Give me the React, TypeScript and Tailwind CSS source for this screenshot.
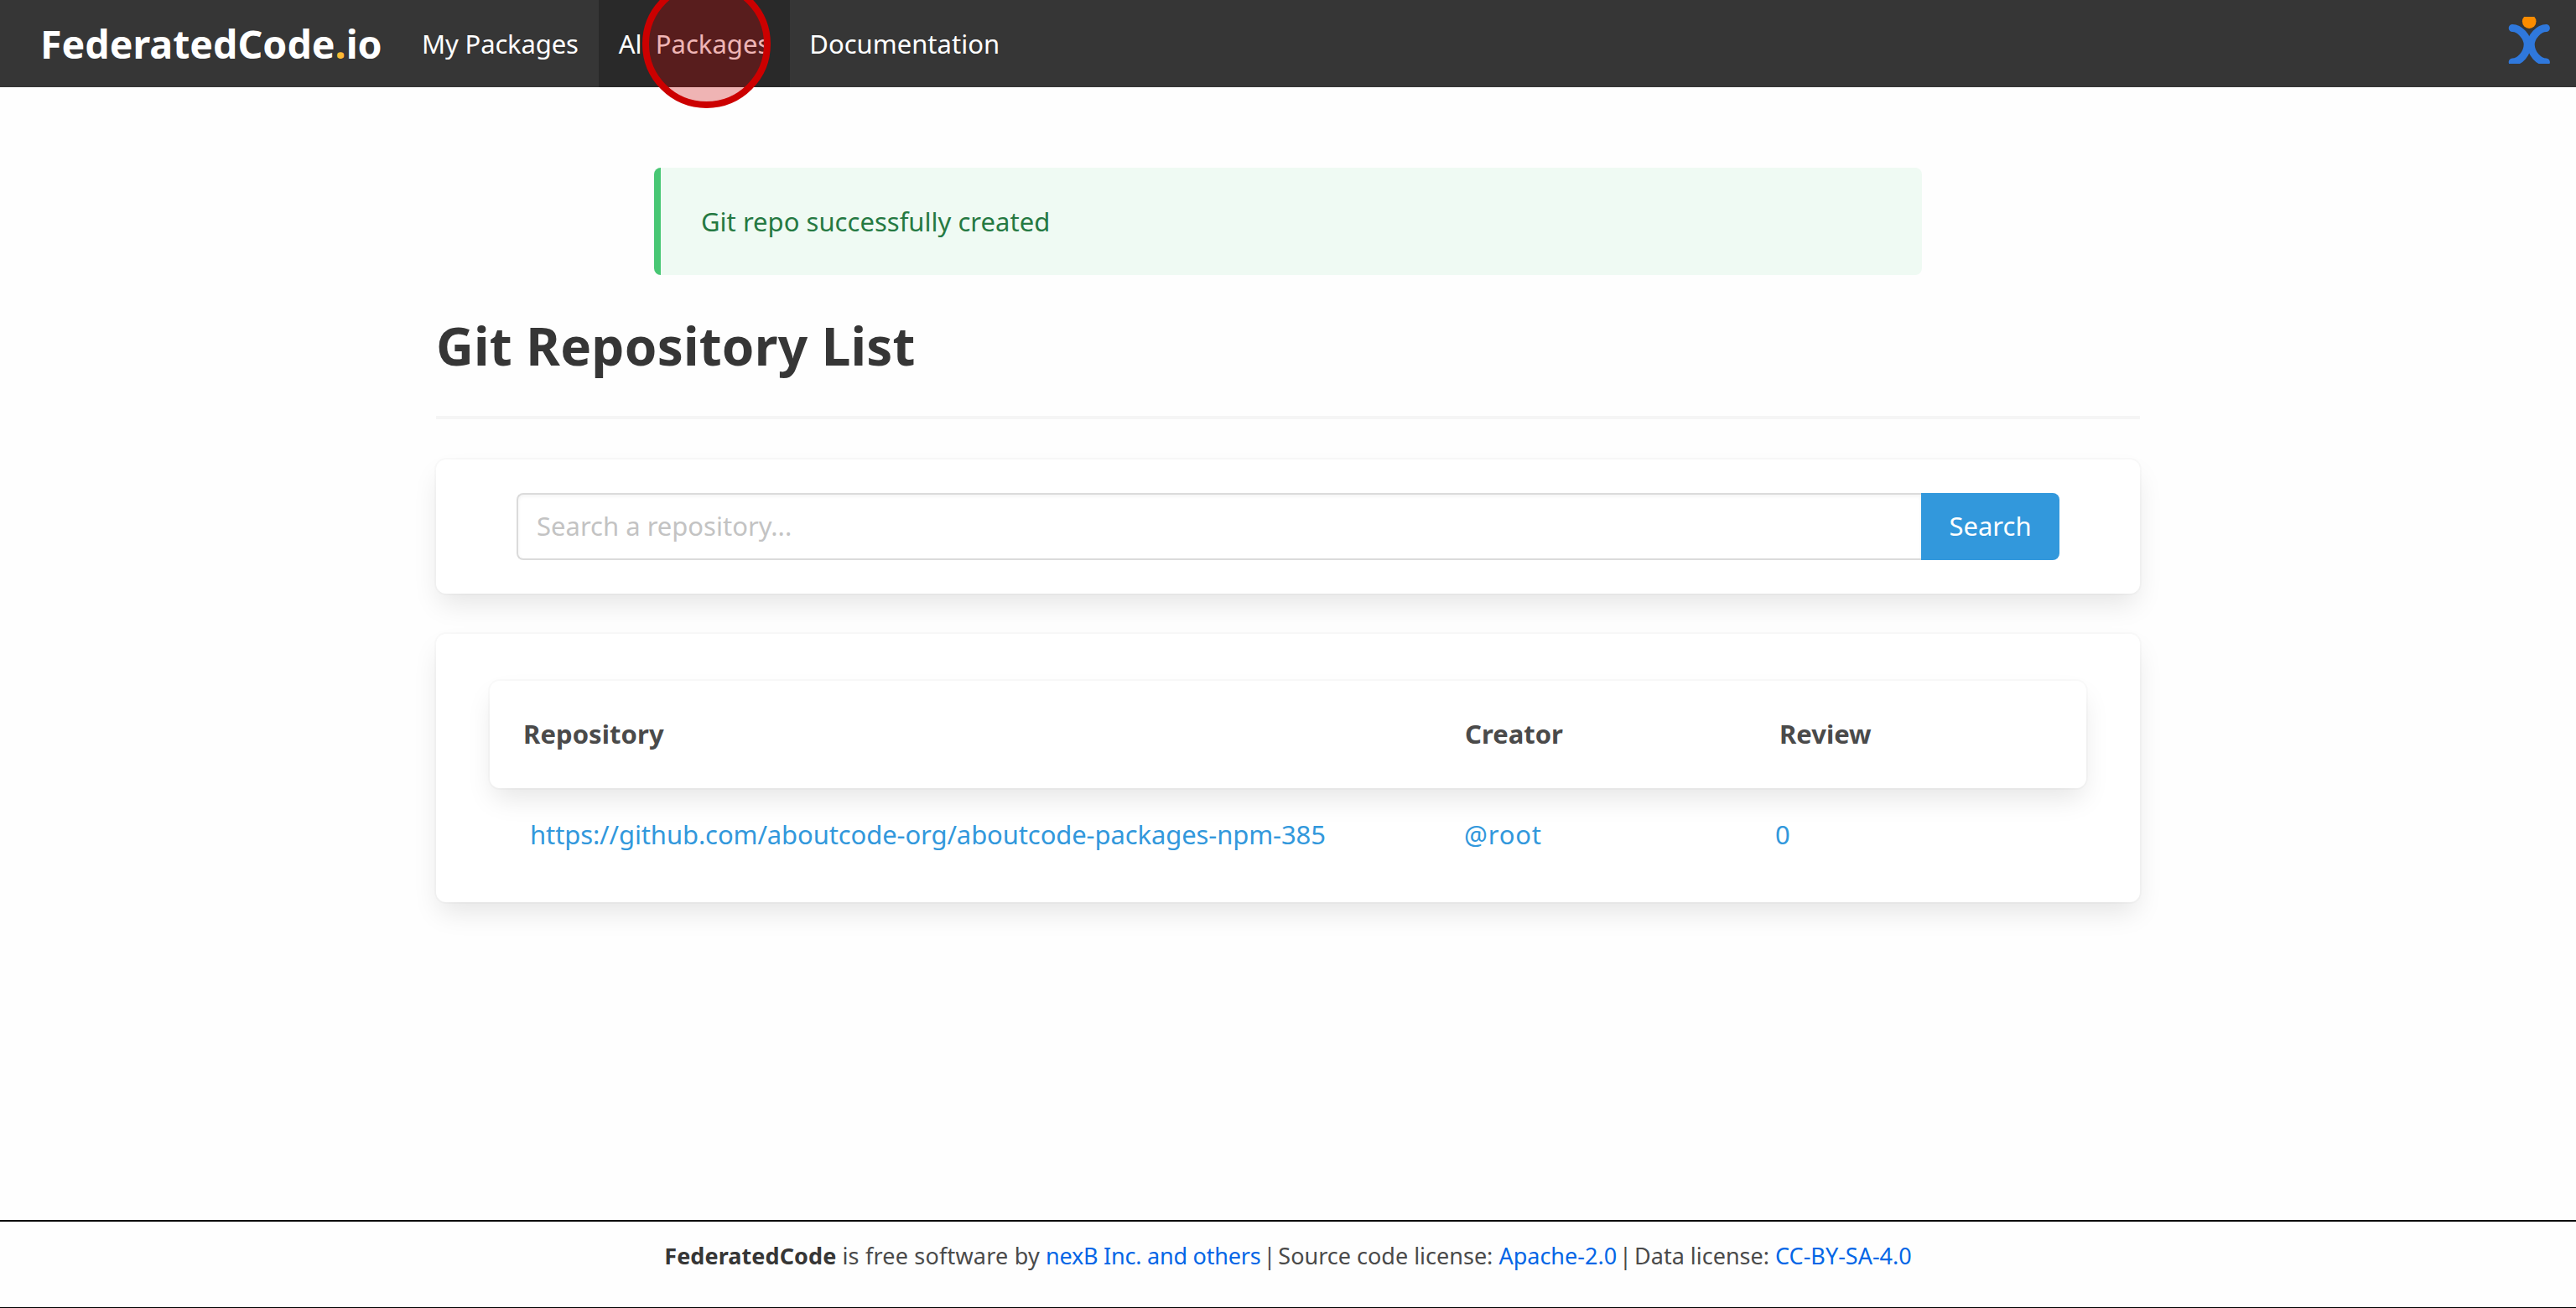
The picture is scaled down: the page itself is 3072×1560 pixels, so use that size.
import { clsx } from "clsx";
import type { ReactNode } from "react";

interface Repo {
  url: string;
  creator: string;
  reviews: number;
}

const navItems = [
  { label: "My Packages", active: false, className: "pl-[25px] tracking-[-0.15px]" },
  { label: "All Packages", active: true, className: "tracking-[0.03px]" },
  { label: "Documentation", active: false, className: "pl-[23px]" }
];

const repos: Repo[] = [{ url: "https://github.com/aboutcode-org/aboutcode-packages-npm-385", creator: "@root", reviews: 0 }];

export default function App() {
  return (
    <div className="flex h-[1560px] flex-col overflow-hidden border-b border-black bg-[#fefefe] font-['Noto_Sans','Open_Sans',sans-serif] text-[31px] leading-[48px] text-[#4a4a4a]">
      <Navbar />
      <main className="mx-auto w-[2032px] flex-1 pt-24">
        <div className="mx-auto w-[1512px] rounded-lg border-l-8 border-[#48c774] bg-[#effaf3] px-12 py-10 tracking-[0.02px] text-[#257942]">
          Git repo successfully created
        </div>
        <h1 className="mt-12 text-[62px] font-bold leading-[72px] tracking-[0.2px] text-[#363636]">Git Repository List</h1>
        <hr className="my-12 h-1 border-0 bg-[#f5f5f5]" />
        <Box className="px-24 py-10">
          <form className="flex h-20" onSubmit={(event) => event.preventDefault()}>
            <input
              type="text"
              placeholder="Search a repository..."
              className="min-w-0 flex-1 rounded-l-lg border-2 border-r-0 border-[#dbdbdb] bg-white px-[22px] pb-0.5 text-[#363636] shadow-[inset_0_2px_4px_rgba(10,10,10,0.05)] outline-none placeholder:text-[#c3c3c3]"
            />
            <button type="submit" className="w-[165px] rounded-r-lg bg-[#3298dc] pb-0.5 text-white">
              Search
            </button>
          </form>
        </Box>
        <Box className="mt-12 h-80 px-16 pt-14">
          <Box className="flex h-32 items-center pl-10 font-bold">
            <div className="w-[1123px] pb-0.5 tracking-[0.07px]">Repository</div>
            <div className="w-[375px] pb-0.5">Creator</div>
            <div className="pb-0.5">Review</div>
          </Box>
          {repos.map((repo) => (
            <div key={repo.url} className="flex pl-12 pt-[31px] text-[#3298dc]">
              <a href="#repo" className="w-[1114px] tracking-[-0.11px]">
                {repo.url}
              </a>
              <a href="#creator" className="w-[371px] tracking-[0.8px]">
                {repo.creator}
              </a>
              <a href="#reviews">{repo.reviews}</a>
            </div>
          ))}
        </Box>
      </main>
      <footer className="h-[104px] shrink-0 border-t-2 border-black pt-5 text-center text-[27px] leading-[42px]">
        <strong className="tracking-[0.08px] text-[#363636]">FederatedCode</strong> <span className="tracking-[0.2px]">is free software by</span>{" "}
        <FooterLink className="tracking-[-0.22px]">nexB Inc. and others</FooterLink> <span className="-mx-1">|</span> <span>Source code license:</span>{" "}
        <FooterLink>Apache-2.0</FooterLink> <span className="-mx-1">|</span> <span>Data license:</span> <FooterLink>CC-BY-SA-4.0</FooterLink>
      </footer>
    </div>
  );
}

function Navbar() {
  return (
    <nav className="flex h-[104px] shrink-0 items-stretch bg-[#363636] text-white">
      <a href="#home" className="flex w-[478px] items-center pl-12 text-[46.5px] font-bold">
        FederatedCode<span className="text-[#fdbb35]">.</span>io
      </a>
      {navItems.map((item) => (
        <a key={item.label} href="#nav" className={clsx("relative flex items-center px-6 pb-px", item.active && "bg-[#292929]", item.className)}>
          {item.label}
          {item.active ? <ClickMarker /> : null}
        </a>
      ))}
      <a href="#about" className="ml-auto flex items-start pr-7 pt-5">
        <AboutCodeLogo />
      </a>
    </nav>
  );
}

function ClickMarker() {
  return <span className="absolute left-[52px] top-[-24.5px] z-10 size-[153px] rounded-full border-8 border-[#cc0000] bg-[#cc0000]/29" />;
}

function AboutCodeLogo() {
  return (
    <svg width="56" height="56" viewBox="0 0 56 56" fill="none">
      <g stroke="#2f78dc" strokeWidth="9" strokeLinecap="round">
        <path d="M8.2 13.5C17 13.5 26 24 26.2 33C26 44 17 53.5 8.2 54" />
        <path d="M48.4 13.5C39.5 13.5 30.4 24 30.2 33C30.4 44 39.5 53.5 48.4 54" />
      </g>
      <path d="M23 25L28.3 28L33.6 25V43L28.3 39L23 43Z" fill="#2f78dc" />
      <circle cx="28.2" cy="5.6" r="8.3" fill="#fb8c00" />
    </svg>
  );
}

function Box({ className, children }: { className?: string; children: ReactNode }) {
  return <section className={clsx("rounded-xl bg-white shadow-[0_16px_32px_-4px_rgba(10,10,10,0.1),0_0_0_2px_rgba(10,10,10,0.02)]", className)}>{children}</section>;
}

function FooterLink({ className, children }: { className?: string; children: ReactNode }) {
  return (
    <a href="#link" className={clsx("text-[#0366e6]", className)}>
      {children}
    </a>
  );
}
